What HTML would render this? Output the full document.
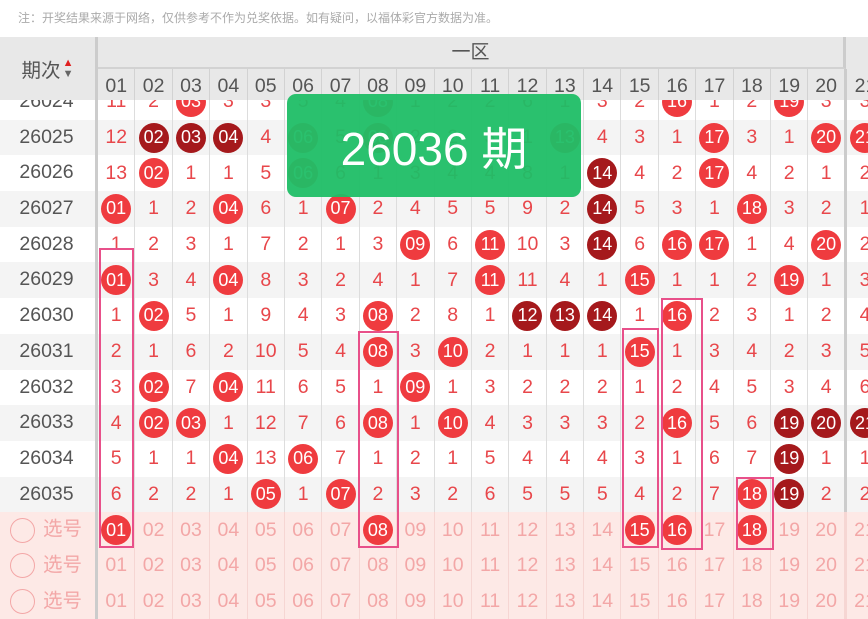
<!DOCTYPE html>
<html><head><meta charset="utf-8"><style>
*{margin:0;padding:0;box-sizing:border-box}
body{width:868px;height:598px;overflow:hidden;background:#fff;font-family:"Liberation Sans","Noto Sans CJK SC",sans-serif;position:relative}
.note{position:absolute;left:18px;top:9px;font-size:12px;color:#aaa}
.body{position:absolute;left:0;top:84px;width:868px}
.r{display:flex;height:35.7px;background:#fff}
.r.g{background:#f4f4f4}
.q{flex:none;text-align:center;line-height:35.7px;font-size:19.5px;color:#555;border-right:3px solid #ccc;width:98px;padding-right:2px}
s{text-decoration:none;width:37.4px;flex:none;border-right:1px solid #ddd;display:flex;align-items:center;justify-content:center;font-size:19.5px;color:#e8474b}
s:nth-child(21){border-right:3px solid #ccc;width:38.4px}
b,u{display:flex;align-items:center;justify-content:center;width:30px;height:30px;border-radius:50%;background:#ef3b3f;color:#fff;font-weight:normal;text-decoration:none;font-size:18px}
u{background:#a5191c}
.sel{background:#fde9e6}
.sel s{color:#f3a7a7;border-right-color:#f6d6d3}
.sel .q{color:#f3a7a7;text-align:left;padding-left:10px;display:flex;align-items:center;gap:8px;border-right-color:#ccc}
.c{width:25px;height:25px;border-radius:50%;border:1.5px solid #f3a7a7;display:inline-block}
.hd{position:absolute;left:0;top:37px;width:868px;height:63px;background:#e8e8e8;z-index:2}
.hd .qh{position:absolute;left:0;top:0;height:63px;border-right:3px solid #ccc;font-size:19.5px;color:#555;display:flex;align-items:center;justify-content:center;width:98px}
.hd .z{position:absolute;left:98px;top:0;width:748px;height:32px;text-align:center;line-height:32px;font-size:19px;color:#555;border-right:3px solid #ccc;border-bottom:2px solid #d2d2d2}
.hd .n{position:absolute;left:98px;top:32px;display:flex;height:31px}
.hd .n s{color:#555;font-size:19.5px;background:#e8e8e8;border-right:1px solid #d2d2d2;padding-top:4px}
.box{position:absolute;border:2.5px solid #e8508a;z-index:3}
.green{position:absolute;left:287px;top:94px;width:294px;height:103px;background:rgba(31,190,102,.95);border-radius:9px;z-index:4;color:#fff;font-size:46px;display:flex;align-items:center;justify-content:center}
</style></head><body>
<div class="note">注：开奖结果来源于网络，仅供参考不作为兑奖依据。如有疑问，以福体彩官方数据为准。</div>
<div class="hd"><div class="qh">期次<span style="display:inline-flex;flex-direction:column;margin-left:2px;font-size:11px;line-height:11px"><span style="color:#e02020">▲</span><span style="color:#666">▼</span></span></div>
<div class="z">一区</div>
<div class="n"><s>01</s><s>02</s><s>03</s><s>04</s><s>05</s><s>06</s><s>07</s><s>08</s><s>09</s><s>10</s><s>11</s><s>12</s><s>13</s><s>14</s><s>15</s><s>16</s><s>17</s><s>18</s><s>19</s><s style="border-right:3px solid #ccc;width:38.4px">20</s><s>21</s></div></div>
<div class="body">
<div class="r"><div class="q">26024</div><s>11</s><s>2</s><s><b>03</b></s><s>3</s><s>3</s><s>5</s><s>4</s><s><b>08</b></s><s>1</s><s>2</s><s>2</s><s>6</s><s>1</s><s>3</s><s>2</s><s><b>16</b></s><s>1</s><s>2</s><s><b>19</b></s><s>3</s><s>3</s></div>
<div class="r g"><div class="q">26025</div><s>12</s><s><u>02</u></s><s><u>03</u></s><s><u>04</u></s><s>4</s><s><b>06</b></s><s>5</s><s><b>08</b></s><s>2</s><s>2</s><s>3</s><s>1</s><s><b>13</b></s><s>4</s><s>3</s><s>1</s><s><b>17</b></s><s>3</s><s>1</s><s><b>20</b></s><s><b>21</b></s></div>
<div class="r"><div class="q">26026</div><s>13</s><s><b>02</b></s><s>1</s><s>1</s><s>5</s><s><b>06</b></s><s>6</s><s>1</s><s>3</s><s>4</s><s>4</s><s>8</s><s>1</s><s><u>14</u></s><s>4</s><s>2</s><s><b>17</b></s><s>4</s><s>2</s><s>1</s><s>2</s></div>
<div class="r g"><div class="q">26027</div><s><b>01</b></s><s>1</s><s>2</s><s><b>04</b></s><s>6</s><s>1</s><s><b>07</b></s><s>2</s><s>4</s><s>5</s><s>5</s><s>9</s><s>2</s><s><u>14</u></s><s>5</s><s>3</s><s>1</s><s><b>18</b></s><s>3</s><s>2</s><s>1</s></div>
<div class="r"><div class="q">26028</div><s>1</s><s>2</s><s>3</s><s>1</s><s>7</s><s>2</s><s>1</s><s>3</s><s><b>09</b></s><s>6</s><s><b>11</b></s><s>10</s><s>3</s><s><u>14</u></s><s>6</s><s><b>16</b></s><s><b>17</b></s><s>1</s><s>4</s><s><b>20</b></s><s>2</s></div>
<div class="r g"><div class="q">26029</div><s><b>01</b></s><s>3</s><s>4</s><s><b>04</b></s><s>8</s><s>3</s><s>2</s><s>4</s><s>1</s><s>7</s><s><b>11</b></s><s>11</s><s>4</s><s>1</s><s><b>15</b></s><s>1</s><s>1</s><s>2</s><s><b>19</b></s><s>1</s><s>3</s></div>
<div class="r"><div class="q">26030</div><s>1</s><s><b>02</b></s><s>5</s><s>1</s><s>9</s><s>4</s><s>3</s><s><b>08</b></s><s>2</s><s>8</s><s>1</s><s><u>12</u></s><s><u>13</u></s><s><u>14</u></s><s>1</s><s><b>16</b></s><s>2</s><s>3</s><s>1</s><s>2</s><s>4</s></div>
<div class="r g"><div class="q">26031</div><s>2</s><s>1</s><s>6</s><s>2</s><s>10</s><s>5</s><s>4</s><s><b>08</b></s><s>3</s><s><b>10</b></s><s>2</s><s>1</s><s>1</s><s>1</s><s><b>15</b></s><s>1</s><s>3</s><s>4</s><s>2</s><s>3</s><s>5</s></div>
<div class="r"><div class="q">26032</div><s>3</s><s><b>02</b></s><s>7</s><s><b>04</b></s><s>11</s><s>6</s><s>5</s><s>1</s><s><b>09</b></s><s>1</s><s>3</s><s>2</s><s>2</s><s>2</s><s>1</s><s>2</s><s>4</s><s>5</s><s>3</s><s>4</s><s>6</s></div>
<div class="r g"><div class="q">26033</div><s>4</s><s><b>02</b></s><s><b>03</b></s><s>1</s><s>12</s><s>7</s><s>6</s><s><b>08</b></s><s>1</s><s><b>10</b></s><s>4</s><s>3</s><s>3</s><s>3</s><s>2</s><s><b>16</b></s><s>5</s><s>6</s><s><u>19</u></s><s><u>20</u></s><s><u>21</u></s></div>
<div class="r"><div class="q">26034</div><s>5</s><s>1</s><s>1</s><s><b>04</b></s><s>13</s><s><b>06</b></s><s>7</s><s>1</s><s>2</s><s>1</s><s>5</s><s>4</s><s>4</s><s>4</s><s>3</s><s>1</s><s>6</s><s>7</s><s><u>19</u></s><s>1</s><s>1</s></div>
<div class="r g"><div class="q">26035</div><s>6</s><s>2</s><s>2</s><s>1</s><s><b>05</b></s><s>1</s><s><b>07</b></s><s>2</s><s>3</s><s>2</s><s>6</s><s>5</s><s>5</s><s>5</s><s>4</s><s>2</s><s>7</s><s><b>18</b></s><s><u>19</u></s><s>2</s><s>2</s></div>
<div class="r sel"><div class="q"><i class="c"></i>选号</div><s><b>01</b></s><s>02</s><s>03</s><s>04</s><s>05</s><s>06</s><s>07</s><s><b>08</b></s><s>09</s><s>10</s><s>11</s><s>12</s><s>13</s><s>14</s><s><b>15</b></s><s><b>16</b></s><s>17</s><s><b>18</b></s><s>19</s><s>20</s><s>21</s></div>
<div class="r sel"><div class="q"><i class="c"></i>选号</div><s>01</s><s>02</s><s>03</s><s>04</s><s>05</s><s>06</s><s>07</s><s>08</s><s>09</s><s>10</s><s>11</s><s>12</s><s>13</s><s>14</s><s>15</s><s>16</s><s>17</s><s>18</s><s>19</s><s>20</s><s>21</s></div>
<div class="r sel"><div class="q"><i class="c"></i>选号</div><s>01</s><s>02</s><s>03</s><s>04</s><s>05</s><s>06</s><s>07</s><s>08</s><s>09</s><s>10</s><s>11</s><s>12</s><s>13</s><s>14</s><s>15</s><s>16</s><s>17</s><s>18</s><s>19</s><s>20</s><s>21</s></div>
</div>
<div class="box" style="left:99px;top:248px;width:35px;height:300px"></div>
<div class="box" style="left:358px;top:331px;width:41px;height:217px"></div>
<div class="box" style="left:622px;top:328px;width:37px;height:220px"></div>
<div class="box" style="left:661px;top:298px;width:42px;height:252px"></div>
<div class="box" style="left:736px;top:477px;width:38px;height:73px"></div>
<div class="green">26036 期</div>
</body></html>
